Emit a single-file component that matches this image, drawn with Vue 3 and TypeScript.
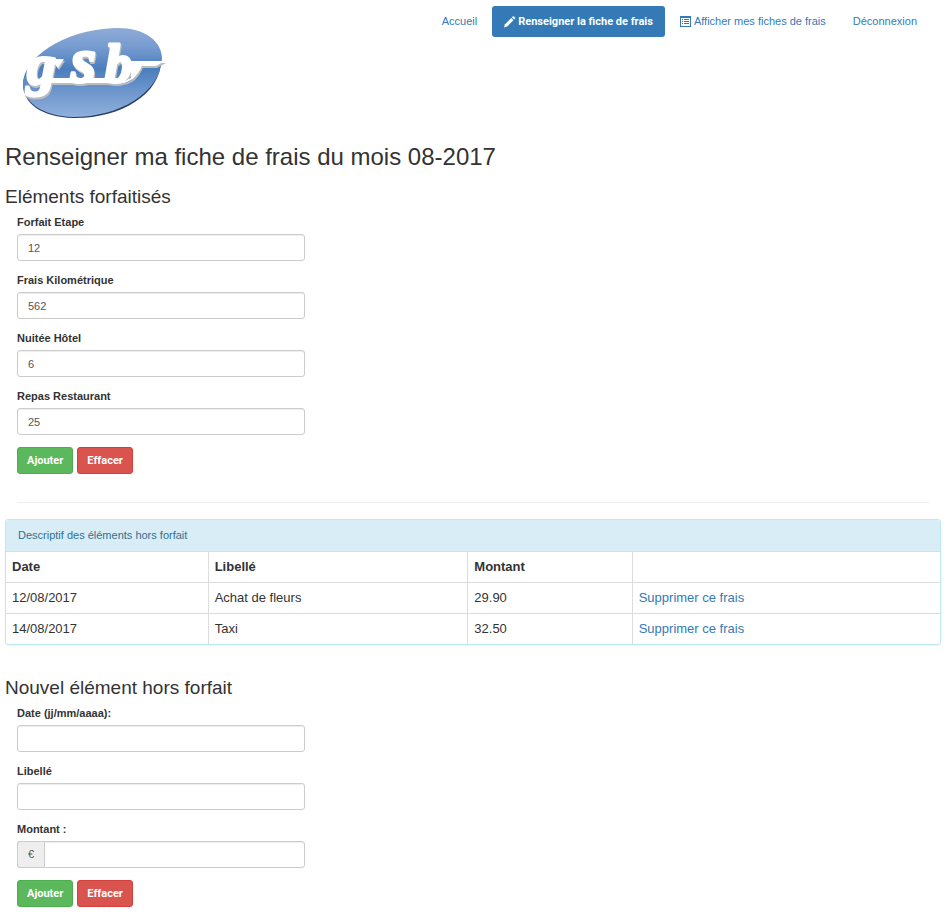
<script setup lang="ts">
import { ref } from 'vue'

interface PackageField {
  id: string
  label: string
  value: string
}

interface Expense {
  date: string
  label: string
  amount: string
}

const month = '08-2017'

const packageFields = ref<PackageField[]>([
  { id: 'etape', label: 'Forfait Etape', value: '12' },
  { id: 'km', label: 'Frais Kilométrique', value: '562' },
  { id: 'nuitee', label: 'Nuitée Hôtel', value: '6' },
  { id: 'repas', label: 'Repas Restaurant', value: '25' },
])

const expenses = ref<Expense[]>([
  { date: '12/08/2017', label: 'Achat de fleurs', amount: '29.90' },
  { date: '14/08/2017', label: 'Taxi', amount: '32.50' },
])

const newDate = ref('')
const newLabel = ref('')
const newAmount = ref('')

function clearPackage() {
  packageFields.value.forEach((field) => (field.value = ''))
}

function addExpense() {
  expenses.value.push({ date: newDate.value, label: newLabel.value, amount: newAmount.value })
  clearExpense()
}

function clearExpense() {
  newDate.value = ''
  newLabel.value = ''
  newAmount.value = ''
}

function removeExpense(index: number) {
  expenses.value.splice(index, 1)
}
</script>

<template>
  <div class="page">
    <header class="header">
      <svg class="logo" viewBox="0 0 156 104" role="img" aria-label="gsb">
        <defs>
          <linearGradient id="oval" x1="0" y1="0" x2="0" y2="1">
            <stop offset="0" stop-color="#8fabd6" />
            <stop offset="0.22" stop-color="#759bd0" />
            <stop offset="0.46" stop-color="#4b7dbd" />
            <stop offset="0.65" stop-color="#6590c9" />
            <stop offset="1" stop-color="#91b0dc" />
          </linearGradient>
        </defs>
        <path
          d="M6 66C7 42 44 13 98 11C126 10 144 23 144 42C144 77 102 101 56 100C25 99 6 86 6 66Z"
          fill="#263f68"
        />
        <path
          d="M6 65C7 41 44 12 98 10C126 9 145 22 145 41C143 75 102 99 56 99C26 98 6 85 6 65Z"
          fill="url(#oval)"
        />
        <g class="lettering">
          <text>
            <tspan class="letter-g" x="10" y="66">g</tspan><tspan class="letter-s" x="54" y="64">s</tspan><tspan class="letter-b" x="88" y="64">b</tspan>
          </text>
          <path d="M34 60H104V65H30Z" />
          <path d="M104 65C114 65 121 57 125 48H139L148 43H114V60Z" />
          <path d="M34 41H47L41 50Z" />
        </g>
      </svg>

      <nav class="nav">
        <a class="nav-link" href="#">Accueil</a>
        <a class="nav-link active" href="#">
          <svg class="icon" viewBox="0 0 12 12" aria-hidden="true">
            <path d="M0 11.5L1 8.3L7.2 2.1L9.4 4.3L3.2 10.5Z" />
            <path d="M7.9 1.4L9 .3Q9.4 0 9.8.3L11.2 1.7Q11.5 2.1 11.2 2.5L10.1 3.6Z" />
          </svg>
          Renseigner la fiche de frais
        </a>
        <a class="nav-link" href="#">
          <svg class="icon" viewBox="0 0 12 12" aria-hidden="true">
            <path
              fill-rule="evenodd"
              d="M0 0H11V11H0ZM1 2V10H10V2ZM2 3H3V4H2ZM4 3H9V4H4ZM2 5H3V6H2ZM4 5H9V6H4ZM2 7H3V8H2ZM4 7H9V8H4Z"
            />
          </svg>
          Afficher mes fiches de frais
        </a>
        <a class="nav-link" href="#">Déconnexion</a>
      </nav>
    </header>

    <main>
      <h2>Renseigner ma fiche de frais du mois {{ month }}</h2>

      <section>
        <h3>Eléments forfaitisés</h3>
        <form class="form" @submit.prevent>
          <div v-for="field in packageFields" :key="field.id" class="field">
            <label :for="field.id">{{ field.label }}</label>
            <input :id="field.id" v-model="field.value" class="control" type="text" />
          </div>
          <div class="actions">
            <button class="btn success" type="submit">Ajouter</button>
            <button class="btn danger" type="button" @click="clearPackage">Effacer</button>
          </div>
        </form>
      </section>

      <hr />

      <section class="panel">
        <div class="panel-heading">Descriptif des éléments hors forfait</div>
        <table>
          <thead>
            <tr>
              <th class="col-date">Date</th>
              <th class="col-label">Libellé</th>
              <th class="col-amount">Montant</th>
              <th></th>
            </tr>
          </thead>
          <tbody>
            <tr v-for="(expense, index) in expenses" :key="index">
              <td>{{ expense.date }}</td>
              <td>{{ expense.label }}</td>
              <td>{{ expense.amount }}</td>
              <td><a href="#" @click.prevent="removeExpense(index)">Supprimer ce frais</a></td>
            </tr>
          </tbody>
        </table>
      </section>

      <section class="new-expense">
        <h3>Nouvel élément hors forfait</h3>
        <form class="form" @submit.prevent="addExpense">
          <div class="field">
            <label for="new-date">Date (jj/mm/aaaa):</label>
            <input id="new-date" v-model="newDate" class="control" type="text" />
          </div>
          <div class="field">
            <label for="new-label">Libellé</label>
            <input id="new-label" v-model="newLabel" class="control" type="text" />
          </div>
          <div class="field">
            <label for="new-amount">Montant :</label>
            <div class="input-group">
              <span class="addon">€</span>
              <input id="new-amount" v-model="newAmount" class="control" type="text" />
            </div>
          </div>
          <div class="actions">
            <button class="btn success" type="submit">Ajouter</button>
            <button class="btn danger" type="button" @click="clearExpense">Effacer</button>
          </div>
        </form>
      </section>
    </main>
  </div>
</template>

<style>
body {
  margin: 0;
  background: #fff;
}
</style>

<style scoped>
.page {
  box-sizing: border-box;
  padding: 6px 8px 16px 5px;
  font-family: Arial, "Liberation Sans", sans-serif;
  font-size: 11px;
  line-height: 15px;
  color: #333;
}

.page *,
.page *::before {
  box-sizing: border-box;
}

a {
  color: #337ab7;
  text-decoration: none;
}

.header {
  display: flex;
  justify-content: space-between;
  align-items: flex-start;
  padding: 0 12px;
}

.logo {
  flex: none;
  width: 156px;
  height: 104px;
  margin-top: 12px;
}

.lettering {
  font-family: "Liberation Serif", serif;
  font-style: italic;
  font-weight: bold;
  fill: #fff;
  filter: drop-shadow(1px 2px 0 #b9bcc2);
}

.lettering text {
  stroke: #fff;
  stroke-width: 3px;
  stroke-linejoin: round;
}

.letter-g {
  font-size: 58px;
}

.letter-s {
  font-size: 64px;
}

.letter-b {
  font-size: 54px;
}

.nav {
  display: flex;
  gap: 3px;
}

.nav-link {
  display: flex;
  align-items: center;
  gap: 2px;
  padding: 8px 12px;
  border-radius: 3px;
  white-space: nowrap;
}

.nav-link.active {
  background: #337ab7;
  color: #fff;
  font-family: Roboto, Arial, sans-serif;
  font-weight: bold;
}

.icon {
  flex: none;
  width: 12px;
  height: 12px;
  fill: currentColor;
}

h2,
h3 {
  margin: 0;
  font-weight: normal;
}

h2 {
  margin: 22px 0 16px;
  font-size: 24px;
  line-height: 26px;
}

h3 {
  margin-bottom: 8px;
  font-size: 19px;
  line-height: 21px;
}

.form {
  width: 33.333%;
  padding: 0 12px;
}

.field {
  margin-bottom: 12px;
}

label {
  display: block;
  margin-bottom: 4px;
  font-weight: bold;
}

.control {
  display: block;
  width: 100%;
  height: 27px;
  padding: 5px 10px;
  border: 1px solid #ccc;
  border-radius: 3px;
  background: #fff;
  box-shadow: inset 0 1px 1px rgba(0, 0, 0, 0.075);
  color: #555;
  font: inherit;
}

.input-group {
  display: flex;
}

.addon {
  padding: 5px 10px;
  border: 1px solid #ccc;
  border-right: 0;
  border-radius: 3px 0 0 3px;
  background: #eee;
  color: #555;
}

.input-group .control {
  flex: 1;
  min-width: 0;
  border-radius: 0 3px 3px 0;
}

.actions {
  display: flex;
  gap: 4px;
}

.btn {
  height: 27px;
  padding: 0 9px;
  border: 1px solid;
  border-radius: 3px;
  color: #fff;
  font: inherit;
  font-family: Roboto, Arial, sans-serif;
  font-weight: bold;
  cursor: pointer;
}

.success {
  border-color: #4cae4c;
  background: #5cb85c;
}

.danger {
  border-color: #d43f3a;
  background: #d9534f;
}

hr {
  margin: 28px 12px 16px;
  border: 0;
  border-top: 1px solid #eee;
}

.panel {
  border: 1px solid #bce8f1;
  border-radius: 3px;
  box-shadow: 0 1px 1px rgba(0, 0, 0, 0.05);
}

.panel-heading {
  padding: 8px 12px;
  border-bottom: 1px solid #bce8f1;
  border-radius: 2px 2px 0 0;
  background: #d9edf7;
  color: #31708f;
}

table {
  width: 100%;
  border-spacing: 0;
  table-layout: fixed;
  font-size: 13px;
  line-height: 18px;
}

th,
td {
  height: 31px;
  padding: 6px;
  border-right: 1px solid #ddd;
  border-bottom: 1px solid #ddd;
  text-align: left;
}

th:last-child,
td:last-child {
  border-right: 0;
}

tbody tr:last-child td {
  height: 30px;
  border-bottom: 0;
}

.col-date {
  width: 21.7%;
}

.col-label {
  width: 27.8%;
}

.col-amount {
  width: 17.6%;
}

.new-expense {
  margin-top: 32px;
}
</style>
